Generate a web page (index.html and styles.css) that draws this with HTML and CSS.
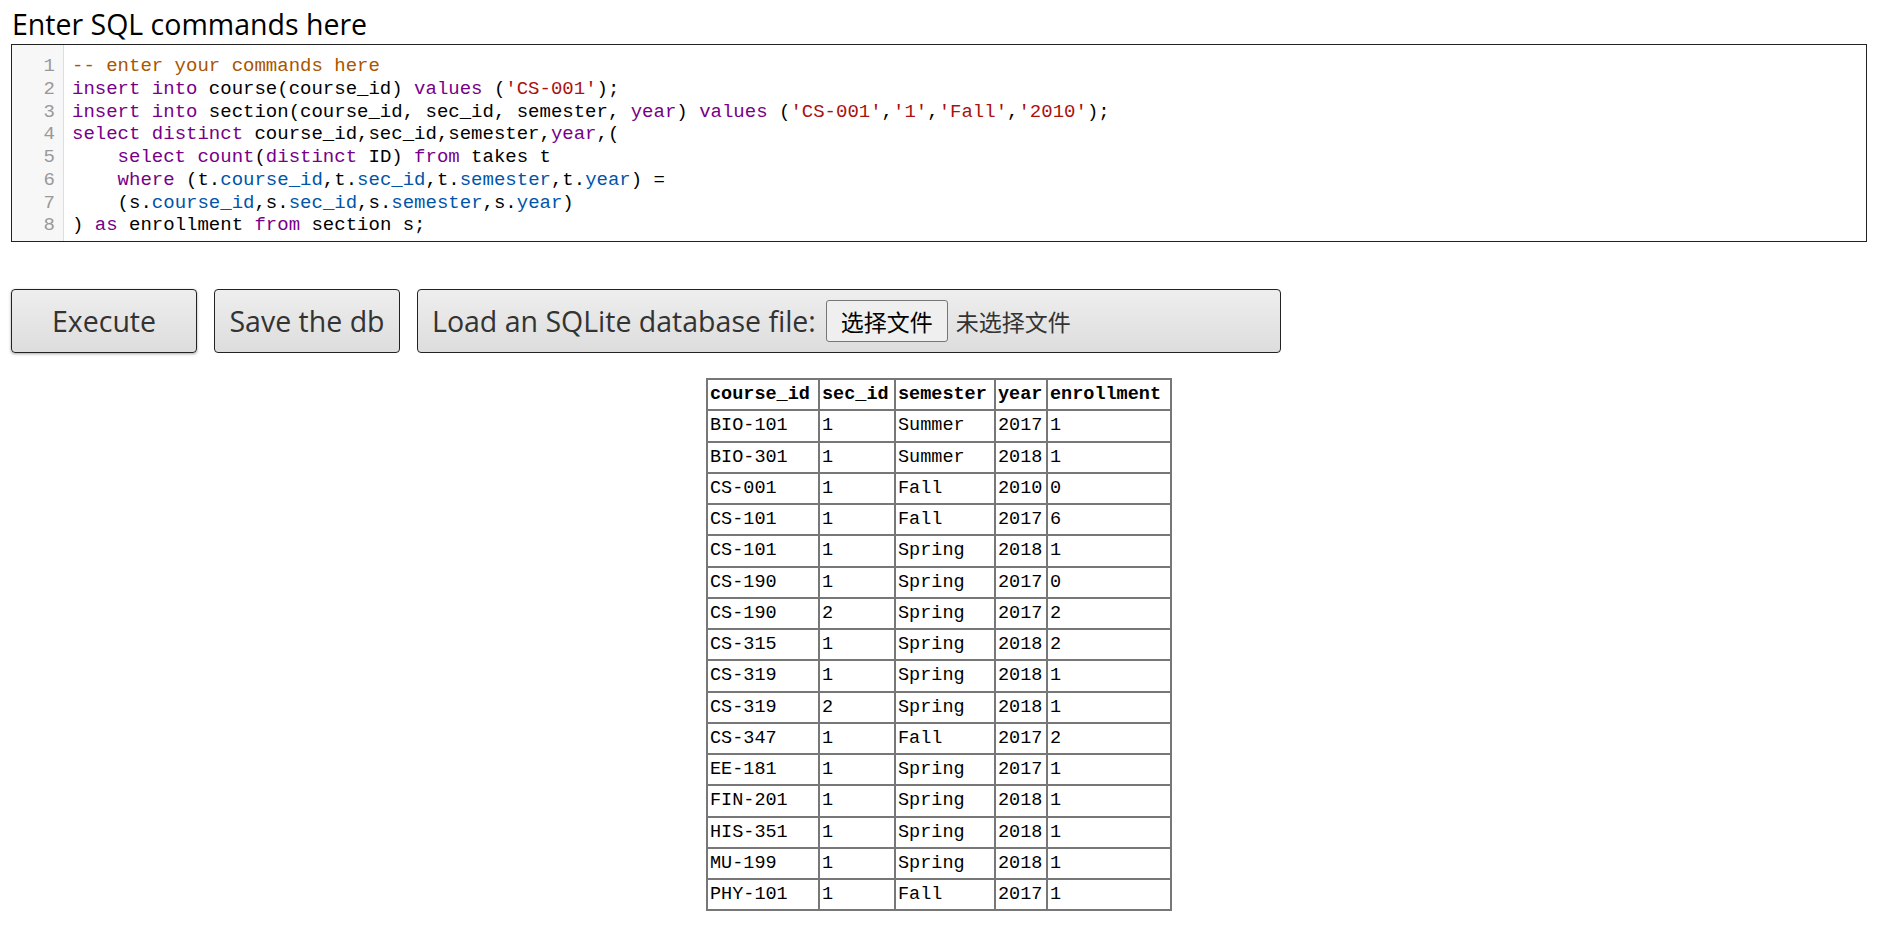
FILE: index.html
```html
<!DOCTYPE html>
<html lang="zh-CN">
<head>
<meta charset="utf-8">
<title>Online SQL interpreter</title>
<link rel="stylesheet" href="styles.css">
</head>
<body>
<main class="page">
  <label class="title" for="commands">Enter SQL commands here</label>
  <div class="editor" id="commands">
    <div class="gutter">
      <div>1</div><div>2</div><div>3</div><div>4</div><div>5</div><div>6</div><div>7</div><div>8</div>
    </div>
    <div class="code">
      <div class="line"><span class="cm">-- enter your commands here</span></div>
      <div class="line"><span class="kw">insert</span> <span class="kw">into</span> course(course_id) <span class="kw">values</span> (<span class="st">'CS-001'</span>);</div>
      <div class="line"><span class="kw">insert</span> <span class="kw">into</span> section(course_id, sec_id, semester, <span class="kw">year</span>) <span class="kw">values</span> (<span class="st">'CS-001'</span>,<span class="st">'1'</span>,<span class="st">'Fall'</span>,<span class="st">'2010'</span>);</div>
      <div class="line"><span class="kw">select</span> <span class="kw">distinct</span> course_id,sec_id,semester,<span class="kw">year</span>,(</div>
      <div class="line">    <span class="kw">select</span> <span class="kw">count</span>(<span class="kw">distinct</span> ID) <span class="kw">from</span> takes t</div>
      <div class="line">    <span class="kw">where</span> (t.<span class="v2">course_id</span>,t.<span class="v2">sec_id</span>,t.<span class="v2">semester</span>,t.<span class="v2">year</span>) =</div>
      <div class="line">    (s.<span class="v2">course_id</span>,s.<span class="v2">sec_id</span>,s.<span class="v2">semester</span>,s.<span class="v2">year</span>)</div>
      <div class="line">) <span class="kw">as</span> enrollment <span class="kw">from</span> section s;</div>
    </div>
  </div>
  <div class="actions">
    <button class="button exec" type="button">Execute</button>
    <button class="button save" type="button">Save the db</button>
    <label class="button load">Load an SQLite database file:<span class="file"><span class="filebtn">选择文件</span><span class="filename">未选择文件</span></span></label>
  </div>
  <table class="results">
    <colgroup>
      <col class="c1"><col class="c2"><col class="c3"><col class="c4"><col class="c5">
    </colgroup>
    <thead>
      <tr><th>course_id</th><th>sec_id</th><th>semester</th><th>year</th><th>enrollment</th></tr>
    </thead>
    <tbody>
      <tr><td>BIO-101</td><td>1</td><td>Summer</td><td>2017</td><td>1</td></tr>
      <tr><td>BIO-301</td><td>1</td><td>Summer</td><td>2018</td><td>1</td></tr>
      <tr><td>CS-001</td><td>1</td><td>Fall</td><td>2010</td><td>0</td></tr>
      <tr><td>CS-101</td><td>1</td><td>Fall</td><td>2017</td><td>6</td></tr>
      <tr><td>CS-101</td><td>1</td><td>Spring</td><td>2018</td><td>1</td></tr>
      <tr><td>CS-190</td><td>1</td><td>Spring</td><td>2017</td><td>0</td></tr>
      <tr><td>CS-190</td><td>2</td><td>Spring</td><td>2017</td><td>2</td></tr>
      <tr><td>CS-315</td><td>1</td><td>Spring</td><td>2018</td><td>2</td></tr>
      <tr><td>CS-319</td><td>1</td><td>Spring</td><td>2018</td><td>1</td></tr>
      <tr><td>CS-319</td><td>2</td><td>Spring</td><td>2018</td><td>1</td></tr>
      <tr><td>CS-347</td><td>1</td><td>Fall</td><td>2017</td><td>2</td></tr>
      <tr><td>EE-181</td><td>1</td><td>Spring</td><td>2017</td><td>1</td></tr>
      <tr><td>FIN-201</td><td>1</td><td>Spring</td><td>2018</td><td>1</td></tr>
      <tr><td>HIS-351</td><td>1</td><td>Spring</td><td>2018</td><td>1</td></tr>
      <tr><td>MU-199</td><td>1</td><td>Spring</td><td>2018</td><td>1</td></tr>
      <tr><td>PHY-101</td><td>1</td><td>Fall</td><td>2017</td><td>1</td></tr>
    </tbody>
  </table>
</main>
</body>
</html>
```
FILE: styles.css
```css
* { box-sizing: border-box; }

html, body {
  margin: 0;
  padding: 0;
  background: #fff;
}

body {
  font-family: "Open Sans", "Noto Sans", sans-serif;
  color: #000;
}

.page {
  padding: 0 13px 0 11px;
}

.title {
  display: block;
  height: 44px;
  padding: 6px 0 0 1px;
  font-size: 28.5px;
  line-height: 36px;
  color: #000;
  white-space: nowrap;
}

.editor {
  display: flex;
  height: 198px;
  border: 1px solid #222;
  background: #fff;
  font-family: "Liberation Mono", monospace;
  font-size: 19px;
  line-height: 22.75px;
}

.gutter {
  width: 52px;
  padding: 10px 8px 0 0;
  background: #f7f7f7;
  border-right: 1px solid #ddd;
  color: #999;
  text-align: right;
}

.code {
  flex: 1;
  padding: 10px 0 0 8px;
  color: #000;
}

.line {
  height: 22.75px;
  white-space: pre;
}

.cm { color: #a50; }
.kw { color: #708; }
.st { color: #a11; }
.v2 { color: #05a; }

.actions {
  display: flex;
  gap: 17px;
  margin-top: 47px;
}

.button {
  display: inline-flex;
  align-items: center;
  height: 64px;
  padding: 0 13px;
  font-family: "Open Sans", "Noto Sans", sans-serif;
  font-size: 28.5px;
  color: #333;
  background: linear-gradient(#eee, #ddd);
  border: 1px solid #222;
  border-radius: 4px;
  white-space: nowrap;
}

.exec {
  width: 186px;
  justify-content: center;
  box-shadow: 0 1px 3px rgba(0, 0, 0, 0.35);
}

.save {
  width: 186px;
  justify-content: center;
}

.load {
  width: 864px;
  padding-left: 14px;
}

.file {
  display: inline-flex;
  align-items: center;
  margin-left: 10px;
  font-family: "Noto Sans CJK SC", sans-serif;
  font-size: 23px;
}

.filebtn {
  display: inline-flex;
  align-items: center;
  justify-content: center;
  width: 122px;
  height: 42px;
  background: #efefef;
  border: 1px solid #767676;
  border-radius: 3px;
  color: #000;
}

.filename {
  margin-left: 8px;
  color: #333;
}

.results {
  margin: 25px auto 0;
  width: 464px;
  table-layout: fixed;
  border-collapse: collapse;
  font-family: "Liberation Mono", monospace;
  font-size: 18.5px;
  color: #000;
}

.c1 { width: 112px; }
.c2 { width: 76px; }
.c3 { width: 100px; }
.c4 { width: 52px; }
.c5 { width: 124px; }

.results th,
.results td {
  height: 31.25px;
  padding: 0 2px;
  border: 2px solid #777;
  text-align: left;
  white-space: nowrap;
  overflow: hidden;
}

.results th {
  font-weight: bold;
}
```
